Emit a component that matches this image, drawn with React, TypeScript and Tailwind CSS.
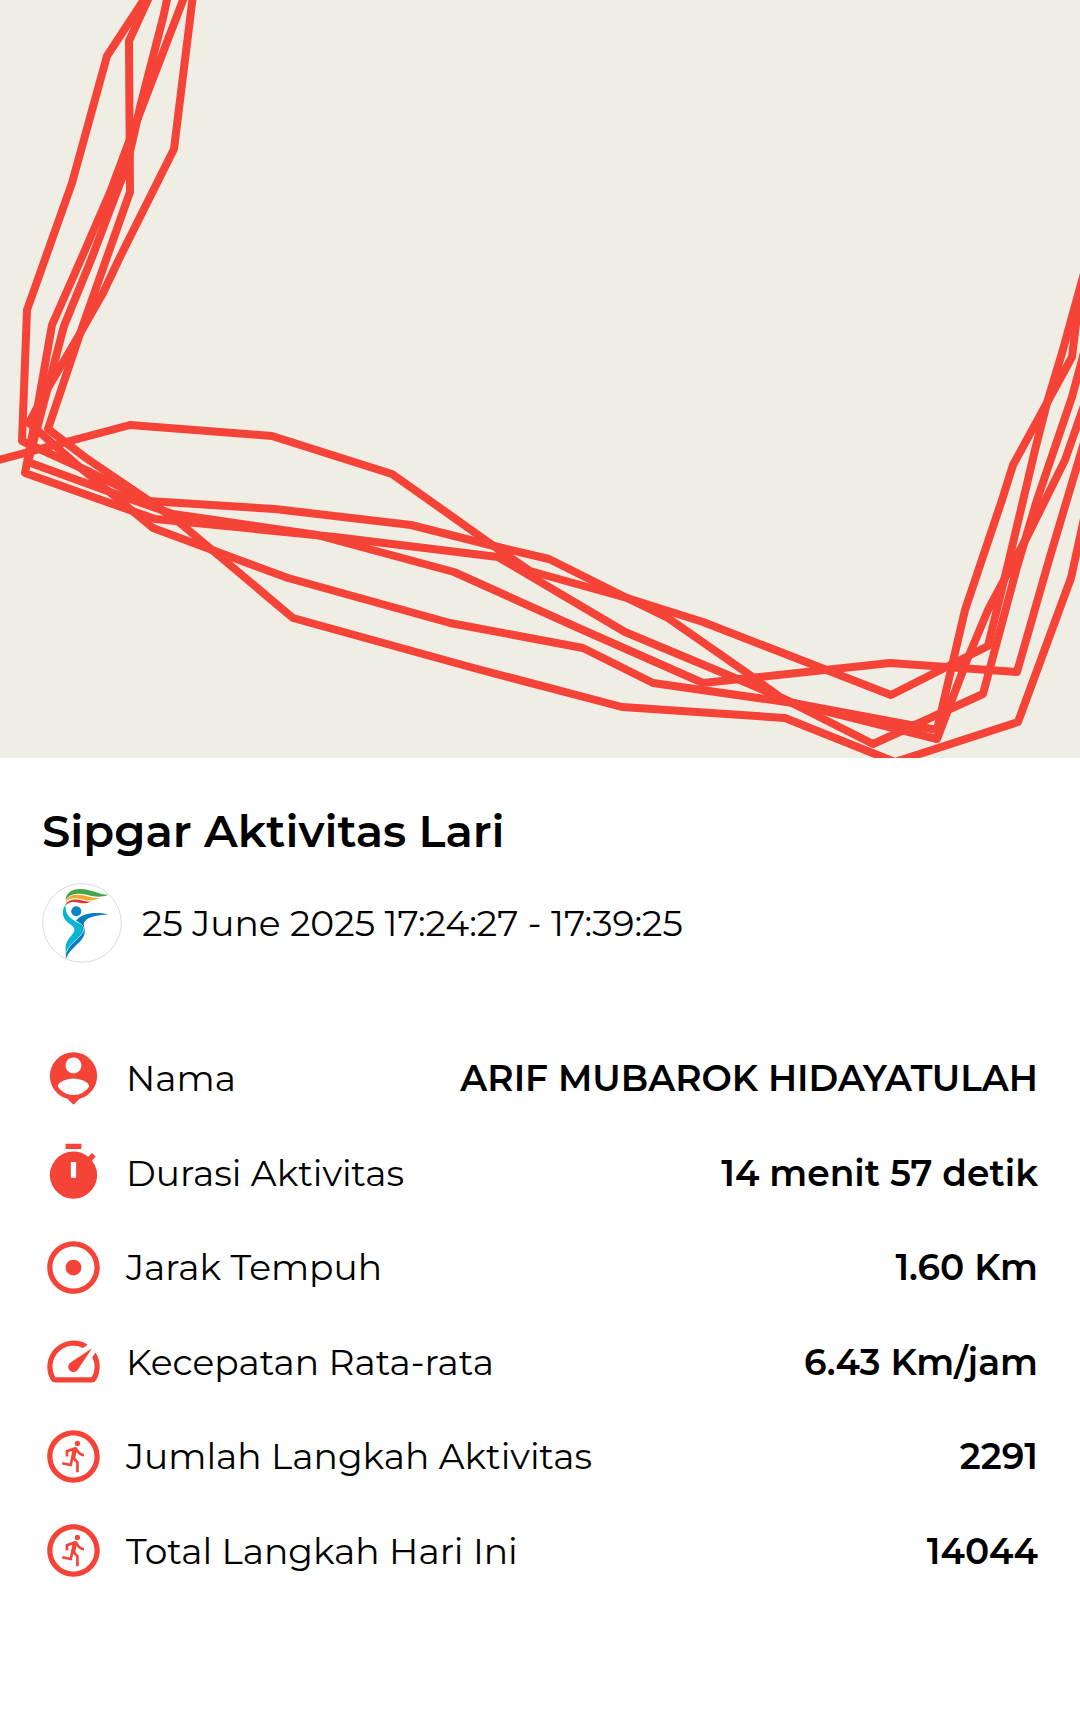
import type { ReactNode } from "react";
import { MdAdjust, MdOutlineRunCircle, MdSpeed } from "react-icons/md";

const laps = [
  "147,-5 107,56 72,183 27,310 22,441 90,472 148,501 275,509 411,525 490,545 549,559 627,598 668,618 747,673 780,697 873,744 983,694 1017,567 1037,500 1072,397 1086,345",
  "150,-5 129,41 130,192 83,325 48,429 86,458 148,500 180,523 293,618 470,667 622,707 785,718 895,762 1018,722 1071,578 1087,505",
  "168,-5 163,18 141,103 127,165 91,260 64,326 38,425 28,462 110,492 173,514 317,535 454,572 583,630 703,683 890,663 1017,672 1049,560 1086,436",
  "185,-5 139,115 111,190 82,257 52,325 36,416 25,473 155,519 335,537 498,557 625,632 747,683 793,703 937,730 965,610 1002,500 1013,465 1072,357 1080,290",
  "193,-5 174,149 120,257 103,293 78,337 45,393 29,423 83,470 153,528 288,578 450,623 583,648 653,683 793,703 937,739 967,660 988,610 1027,537 1065,460 1086,400",
  "-5,461 130,425 272,436 392,474 443,510 495,547 530,571 627,598 703,622 891,695 988,646 1009,560 1035,450 1047,403 1062,353 1086,266",
];

function RouteMap() {
  return (
    <svg
      viewBox="0 0 1080 758"
      role="img"
      aria-label="Rute lari"
      className="block w-full bg-[#f0ede4]"
    >
      <g fill="none" stroke="#f54337" strokeWidth="8" strokeLinejoin="round">
        {laps.map((points) => (
          <polyline key={points} points={points} />
        ))}
      </g>
    </svg>
  );
}

function Logo() {
  return (
    <svg viewBox="36 41 238 238" className="size-20 shrink-0" aria-hidden="true">
      <circle cx="155" cy="160" r="117" fill="#fff" stroke="#c9c9c9" strokeWidth="2" />
      {/* Flame */}
      <path d="M106 91C108 71 125 58 151 59C182 60 202 75 234 76C211 85 190 82 169 76C142 69 119 73 106 91Z" fill="#43a548" />
      <path d="M105 99C109 82 127 73 153 77C173 80 187 88 208 85C191 95 174 94 158 90C133 84 116 85 105 99Z" fill="#f2aa2e" />
      <path d="M105 109C108 95 124 88 146 91C159 93 168 98 181 95C171 102 158 103 146 100C127 95 114 98 105 109Z" fill="#e13a32" />
      {/* Runner */}
      <circle cx="138" cy="125" r="15" fill="#0a84c4" />
      <path d="M106 106C94 122 95 143 112 158C124 168 135 173 132 184C127 199 107 208 106 234L107 256C113 225 158 207 160 178C160 165 147 160 135 154C116 145 105 132 106 106Z" fill="#08b5d2" />
      <path d="M137 153C154 131 190 125 234 134C205 137 177 140 164 154C156 163 165 174 163 188C158 220 123 228 107 266C105 228 140 214 155 190C163 177 154 163 137 153Z" fill="#087dbe" />
      <path d="M134 154C150 161 162 167 160 180C156 203 119 217 109 246" fill="none" stroke="#fff" strokeWidth="2" />
    </svg>
  );
}

function PersonPin() {
  return (
    <svg viewBox="0 0 24 24" fill="currentColor" className="size-full">
      <path d="M12 2a9 9 0 0 0-9 9c0 4.17 2.84 7.67 6.69 8.69L12 22l2.31-2.31C18.16 18.67 21 15.17 21 11a9 9 0 0 0-9-9zm0 2c1.66 0 3 1.34 3 3s-1.34 3-3 3-3-1.34-3-3 1.34-3 3-3zm0 14.3a7.2 7.2 0 0 1-6-3.22c.03-1.99 4-3.08 6-3.08 1.99 0 5.97 1.09 6 3.08a7.2 7.2 0 0 1-6 3.22z" />
    </svg>
  );
}

function Stopwatch() {
  return (
    <svg viewBox="0 0 24 24" fill="currentColor" className="size-full">
      <path d="M15 1H9v2h6V1zM19.03 7.39l1.42-1.42c-.43-.51-.9-.99-1.41-1.41l-1.42 1.42A8.96 8.96 0 0 0 12 4a9 9 0 1 0 7.03 3.39zM13 14h-2V8h2v6z" />
    </svg>
  );
}

const stats: { label: string; value: string; icon: ReactNode }[] = [
  { label: "Nama", value: "ARIF MUBAROK HIDAYATULAH", icon: <PersonPin /> },
  { label: "Durasi Aktivitas", value: "14 menit 57 detik", icon: <Stopwatch /> },
  { label: "Jarak Tempuh", value: "1.60 Km", icon: <MdAdjust className="size-full" /> },
  { label: "Kecepatan Rata-rata", value: "6.43 Km/jam", icon: <MdSpeed className="size-full" /> },
  { label: "Jumlah Langkah Aktivitas", value: "2291", icon: <MdOutlineRunCircle className="size-full" /> },
  { label: "Total Langkah Hari Ini", value: "14044", icon: <MdOutlineRunCircle className="size-full" /> },
];

export default function App() {
  return (
    <main className="min-h-screen bg-white font-[Montserrat,Inter,sans-serif] text-black">
      <RouteMap />

      <div className="px-[42px] pb-28 pt-[49px]">
        <h1 className="text-[45px] font-semibold leading-[48px]">Sipgar Aktivitas Lari</h1>

        <div className="mt-7 flex items-center gap-5">
          <Logo />
          <p className="text-[36px] leading-[48px]">25 June 2025 17:24:27 - 17:39:25</p>
        </div>

        {/* Activity stats */}
        <dl className="mt-[68px] grid h-[567px] auto-rows-fr">
          {stats.map(({ label, value, icon }) => (
            <div key={label} className="flex items-center justify-between">
              <dt className="flex items-center gap-[21px] text-[36px] leading-[48px]">
                <span className="size-[63px] text-[#f54337]" aria-hidden="true">
                  {icon}
                </span>
                {label}
              </dt>
              <dd className="text-right text-[36px] font-semibold leading-[48px]">{value}</dd>
            </div>
          ))}
        </dl>
      </div>
    </main>
  );
}
